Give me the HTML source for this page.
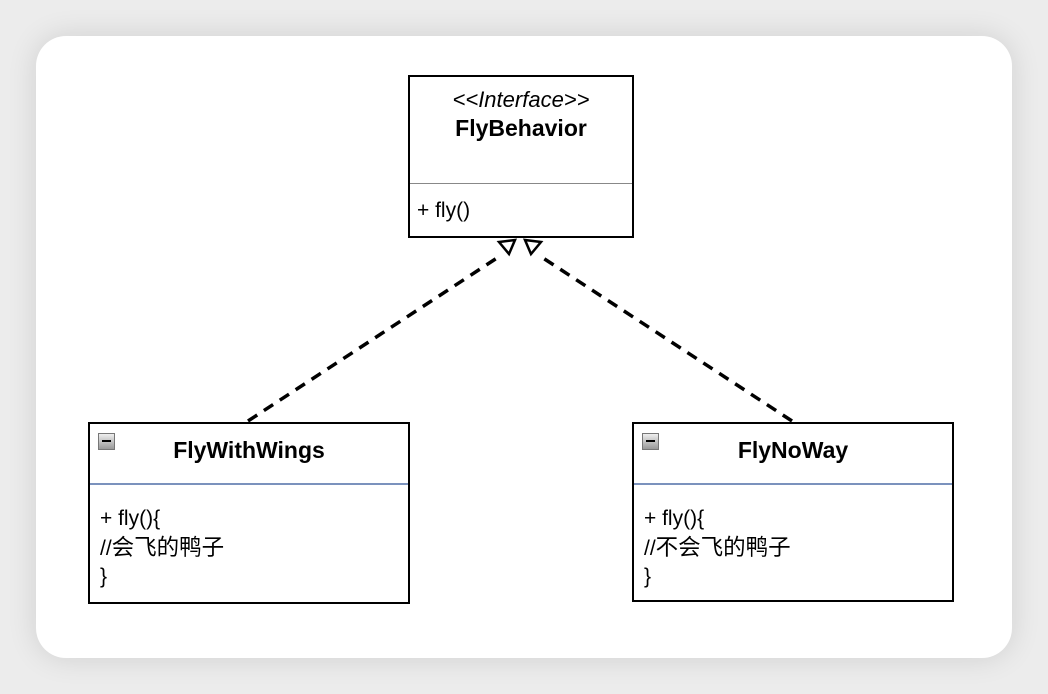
<!DOCTYPE html>
<html><head><style>
body{margin:0;width:1048px;height:694px;background:#ececec;position:relative;overflow:hidden;font-family:"Liberation Sans","Noto Sans CJK SC",sans-serif;}
.card{position:absolute;left:36px;top:36px;width:976px;height:622px;background:#fff;border-radius:30px;box-shadow:0 0 30px rgba(0,0,0,0.12);}
.box{position:absolute;border:2px solid #000;background:#fff;box-sizing:border-box;}
.t{position:absolute;left:0;right:0;text-align:center;color:#000;}
.b{position:absolute;font-size:21px;line-height:28.5px;color:#000;}
.c{font-size:22.5px;}
.mini{position:absolute;left:8px;top:9px;width:17px;height:17px;box-sizing:border-box;border:1px solid #777;background:linear-gradient(#eee,#999);}
.mini:after{content:"";position:absolute;left:3px;top:6px;width:9px;height:2px;background:#000;}
</style></head><body>
<div class="card"></div>
<div class="box" style="left:408px;top:75px;width:226px;height:163px;">
 <div class="t" style="top:10px;font-size:22px;font-style:italic;">&lt;&lt;Interface&gt;&gt;</div>
 <div class="t" style="top:38px;font-size:23px;font-weight:bold;">FlyBehavior</div>
 <div style="position:absolute;left:0;right:0;top:106px;height:1px;background:#888;"></div>
 <div class="b" style="left:7px;top:120px;">+ fly()</div>
</div>
<div class="box" style="left:88px;top:422px;width:322px;height:182px;">
 <div class="mini"></div>
 <div class="t" style="top:13px;font-size:23px;font-weight:bold;">FlyWithWings</div>
 <div style="position:absolute;left:0;right:0;top:59px;height:2px;background:#7b92bd;"></div>
 <div class="b" style="left:10px;top:81px;">+ fly(){<br>//<span class="c">会飞的鸭子</span><br>}</div>
</div>
<div class="box" style="left:632px;top:422px;width:322px;height:180px;">
 <div class="mini"></div>
 <div class="t" style="top:13px;font-size:23px;font-weight:bold;">FlyNoWay</div>
 <div style="position:absolute;left:0;right:0;top:59px;height:2px;background:#7b92bd;"></div>
 <div class="b" style="left:10px;top:81px;">+ fly(){<br>//<span class="c">不会飞的鸭子</span><br>}</div>
</div>
<svg width="1048" height="694" style="position:absolute;left:0;top:0;">
 <g stroke="#000" stroke-width="3.5" fill="none">
  <line x1="248" y1="421" x2="500" y2="256" stroke-dasharray="11,8"/>
  <line x1="792" y1="421" x2="540" y2="256" stroke-dasharray="11,8"/>
 </g>
 <g stroke="#000" stroke-width="2.5" fill="#fff">
  <polygon points="499,242 515,240 509,254"/>
  <polygon points="525,240 541,242 531,254"/>
 </g>
</svg>
</body></html>
